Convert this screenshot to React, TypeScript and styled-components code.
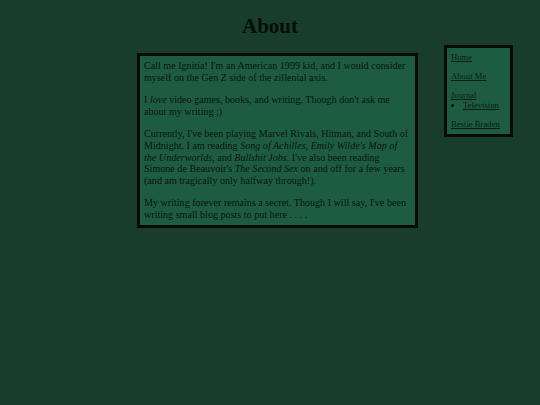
import React from "react";
import styled, { createGlobalStyle } from "styled-components";

const GlobalStyle = createGlobalStyle`
  html, body {
    margin: 0;
    padding: 0;
    background-color: #183d2d;
  }
  body {
    font-family: "Liberation Serif", "Times New Roman", serif;
    color: #08150e;
  }
`;

const Page = styled.div`
  min-height: 405px;
  padding-top: 13px;
`;

const Title = styled.h1`
  margin: 0;
  text-align: center;
  font-size: 21px;
  line-height: 26px;
  font-weight: bold;
  color: #040d08;
`;

const Layout = styled.div`
  display: flex;
  align-items: flex-start;
  gap: 26px;
  padding: 6px 27px 0 137px;
`;

const Card = styled.main`
  flex-shrink: 0;
  width: 267px;
  margin-top: 8px;
  padding: 4px;
  background-color: #1e5c42;
  border: 3px solid #050a07;
  font-size: 10.1px;
  line-height: 11.75px;

  p {
    margin: 10.5px 0;
  }
  p:first-child {
    margin-top: 0;
  }
  p:last-child {
    margin-bottom: 0;
  }
`;

const Sidebar = styled.nav`
  flex-shrink: 0;
  width: 57px;
  padding: 4px 2px 5px 4px;
  background-color: #1e5c42;
  border: 3px solid #050a07;
  font-size: 8.67px;
  line-height: 10px;
`;

const NavGroup = styled.div`
  margin: 9px 0;
  &:first-child {
    margin-top: 0;
  }
  &:last-child {
    margin-bottom: 0;
  }
`;

const NavLink = styled.a`
  color: #0a1c12;
  text-decoration: underline;
`;

const SubList = styled.ul`
  margin: 0;
  padding-left: 12px;
`;

const navItems = [
  { label: "Home" },
  { label: "About Me" },
  { label: "Journal", children: ["Television"] },
  { label: "Bestie Braden" },
];

export default function App() {
  return (
    <>
      <GlobalStyle />
      <Page>
        <Title>About</Title>
        <Layout>
          <Card>
            <p>
              Call me Ignitia! I'm an American 1999 kid, and I would consider
              myself on the Gen Z side of the zillenial axis.
            </p>
            <p>
              I <em>love</em> video games, books, and writing. Though don't ask
              me about my writing ;)
            </p>
            <p>
              Currently, I've been playing Marvel Rivals, Hitman, and South of
              Midnight. I am reading <em>Song of Achilles</em>,{" "}
              <em>Emily Wilde's Map of the Underworlds</em>, and{" "}
              <em>Bullshit Jobs</em>. I've also been reading Simone de
              Beauvoir's <em>The Second Sex</em> on and off for a few years (and
              am tragically only halfway through!).
            </p>
            <p>
              My writing forever remains a secret. Though I will say, I've been
              writing small blog posts to put here . . . .
            </p>
          </Card>
          <Sidebar>
            {navItems.map((item) => (
              <NavGroup key={item.label}>
                <NavLink href="#">{item.label}</NavLink>
                {item.children && (
                  <SubList>
                    {item.children.map((child) => (
                      <li key={child}>
                        <NavLink href="#">{child}</NavLink>
                      </li>
                    ))}
                  </SubList>
                )}
              </NavGroup>
            ))}
          </Sidebar>
        </Layout>
      </Page>
    </>
  );
}
